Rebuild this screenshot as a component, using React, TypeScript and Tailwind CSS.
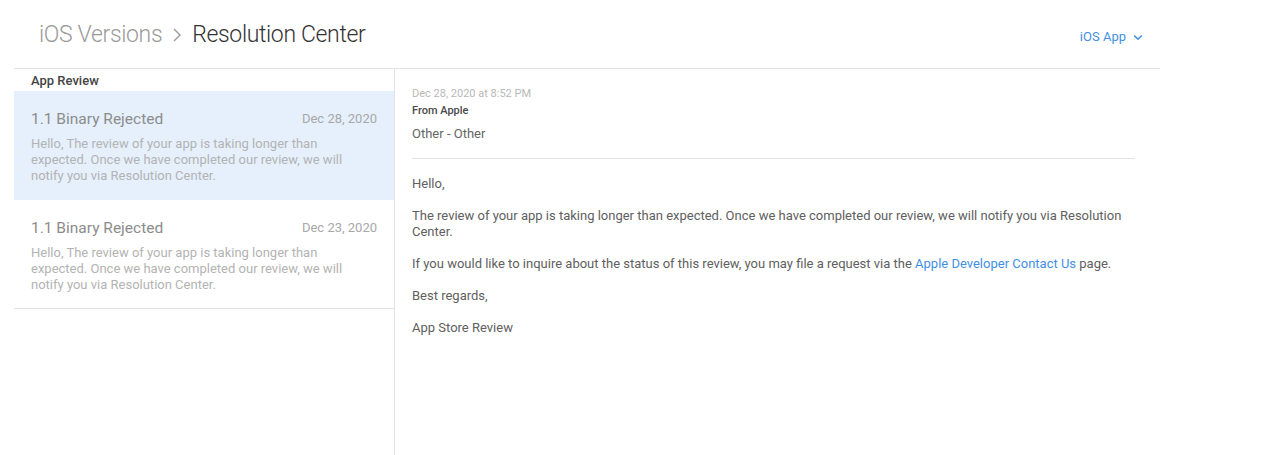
import React from "react";

const font = { fontFamily: "Roboto, 'Helvetica Neue', Arial, sans-serif" };

function Item({ selected, date }: { selected?: boolean; date: string }) {
  return (
    <div
      className={
        "px-[17px] pt-[18px] pb-[15px] border-b " +
        (selected ? "bg-[#e5f0fc] border-[#e5f0fc]" : "bg-white border-[#e3e3e3]")
      }
    >
      <div className="flex items-center justify-between h-[20px]">
        <span className="text-[15.5px] leading-[20px] text-[#8c8c8c]">1.1 Binary Rejected</span>
        <span className="text-[13px] leading-[20px] text-[#a8a8a8]">{date}</span>
      </div>
      <p className="mt-[7px] text-[13px] leading-[16px] text-[#b3b3b3] w-[320px]">
        Hello, The review of your app is taking longer than expected. Once we have completed our review, we will notify you via Resolution Center.
      </p>
    </div>
  );
}

export default function App() {
  return (
    <div className="w-[1280px] h-[455px] bg-white overflow-hidden" style={font}>
      <div className="w-[1160px] h-[68px] flex items-center justify-between pl-[39px] pr-[17px]">
        <div className="flex items-center text-[23px] leading-[30px] font-light tracking-[-0.015em] mt-[2px]">
          <span className="text-[#9a9a9a]">iOS Versions</span>
          <svg className="mx-[10px]" width="10" height="16" viewBox="0 0 10 16" fill="none">
            <path d="M2 2l6 6-6 6" stroke="#9a9a9a" strokeWidth="1.4" />
          </svg>
          <span className="text-[#333333]">Resolution Center</span>
        </div>
        <div className="flex items-center gap-[7px] text-[13px] text-[#3f8fe3] mt-[6px]">
          <span>iOS App</span>
          <svg width="10" height="7" viewBox="0 0 10 7" fill="none">
            <path d="M1.2 1.5L5 5.2l3.8-3.7" stroke="#3f8fe3" strokeWidth="1.6" />
          </svg>
        </div>
      </div>
      <div className="ml-[14px] w-[1146px] h-[387px] border-t border-[#e3e3e3] flex">
        <div className="w-[381px] border-r border-[#e3e3e3] shrink-0">
          <div className="h-[22px] pt-[1px] flex items-center px-[17px] text-[13px] font-medium text-[#444444]">App Review</div>
          <Item selected date="Dec 28, 2020" />
          <Item date="Dec 23, 2020" />
        </div>
        <div className="flex-1 pl-[17px] pr-[25px] pt-[18px]">
          <div className="text-[11px] leading-[14px] text-[#b8b8b8]">Dec 28, 2020 at 8:52 PM</div>
          <div className="mt-[3px] text-[11px] leading-[14px] font-medium text-[#4a4a4a]">From Apple</div>
          <div className="mt-[7px] text-[13px] leading-[18px] text-[#666666]">Other - Other</div>
          <div className="mt-[15px] border-t border-[#e3e3e3]" />
          <div className="mt-[17px] text-[13px] leading-[16px] text-[#606060] flex flex-col gap-[16px]">
            <p>Hello,</p>
            <p>
              The review of your app is taking longer than expected. Once we have completed our review, we will notify you via Resolution Center.
            </p>
            <p>
              If you would like to inquire about the status of this review, you may file a request via the{" "}
              <span className="text-[#3f8fe3]">Apple Developer Contact Us</span> page.
            </p>
            <p>Best regards,</p>
            <p>App Store Review</p>
          </div>
        </div>
      </div>
    </div>
  );
}
